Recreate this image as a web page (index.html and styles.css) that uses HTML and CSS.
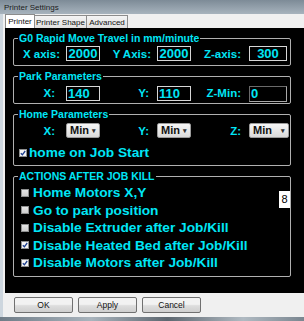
FILE: index.html
```html
<!DOCTYPE html>
<html lang="en">

<head>
  <meta charset="UTF-8">
  <title>Printer Settings</title>
  <link rel="stylesheet" href="styles.css">
</head>

<body>
  <div class="titlebar">Printer Settings</div>

  <div class="window">
    <div class="tabs">
      <span class="tab active">Printer</span>
      <span class="tab">Printer Shape</span>
      <span class="tab">Advanced</span>
    </div>

    <div class="page">
      <fieldset class="group">
        <legend>G0 Rapid Move Travel in mm/minute</legend>
        <div class="row">
          <label>X axis:</label><span class="num center">2000</span>
          <label>Y Axis:</label><span class="num center">2000</span>
          <label class="far">Z-axis:</label><span class="num center">300</span>
        </div>
      </fieldset>

      <fieldset class="group">
        <legend>Park Parameters</legend>
        <div class="row wide-gap">
          <label>X:</label><span class="num">140</span>
          <label>Y:</label><span class="num">110</span>
          <label>Z-Min:</label><span class="num sunken">0</span>
        </div>
      </fieldset>

      <fieldset class="group">
        <legend>Home Parameters</legend>
        <div class="row wide-gap sel-row">
          <label>X:</label><span class="combo">Min<i>&#9662;</i></span>
          <label>Y:</label><span class="combo">Min<i>&#9662;</i></span>
          <label>Z:</label><span class="combo long">Min<i>&#9662;</i></span>
        </div>
        <div class="check home">
          <span class="box on"><svg width="6" height="6" viewBox="0 0 6 6"><path d="M0.8 3.2 L2.4 4.8 L5.2 1" fill="none" stroke="#1d3f8f" stroke-width="1.3"/></svg></span>
          home on Job Start
        </div>
      </fieldset>

      <fieldset class="group actions">
        <legend>ACTIONS AFTER JOB KILL</legend>
        <span class="badge">8</span>
        <div class="check"><span class="box"></span>Home Motors X,Y</div>
        <div class="check"><span class="box"></span>Go to park position</div>
        <div class="check"><span class="box"></span>Disable Extruder after Job/Kill</div>
        <div class="check"><span class="box on"><svg width="6" height="6" viewBox="0 0 6 6"><path d="M0.8 3.2 L2.4 4.8 L5.2 1" fill="none" stroke="#1d3f8f" stroke-width="1.3"/></svg></span>Disable Heated Bed after Job/Kill</div>
        <div class="check"><span class="box on"><svg width="6" height="6" viewBox="0 0 6 6"><path d="M0.8 3.2 L2.4 4.8 L5.2 1" fill="none" stroke="#1d3f8f" stroke-width="1.3"/></svg></span>Disable Motors after Job/Kill</div>
      </fieldset>
    </div>

    <div class="buttons">
      <button>OK</button>
      <button>Apply</button>
      <button>Cancel</button>
    </div>
  </div>

  <div class="glass-bottom"></div>
</body>

</html>
```

FILE: styles.css
```css
body {
  margin: 0;
  width: 304px;
  height: 321px;
  overflow: hidden;
  font-family: "Liberation Sans", Arial, sans-serif;
  background-color: #9aa6b1;
}

.titlebar {
  height: 14px;
  line-height: 15px;
  padding-left: 4px;
  font-size: 8px;
  color: #1b1b1b;
  background: linear-gradient(#7d8b97, #a7b3bd);
}

.window {
  height: 303px;
  border-left: 3px solid #cdd6de;
  background-color: #f0f0f0;
}

/* tab strip */
.tabs {
  display: flex;
  height: 14px;
  padding-left: 2px;
  align-items: flex-end;
}

.tab {
  height: 13px;
  line-height: 13px;
  font-size: 8px;
  color: #111;
  text-align: center;
  white-space: nowrap;
  border: 1px solid #8c8c8c;
  border-bottom: none;
  background: linear-gradient(#f4f4f4, #e0e0e0);
  box-sizing: border-box;
}

.tab:nth-child(1) { width: 30px; }
.tab:nth-child(2) { width: 53px; margin-left: -1px; }
.tab:nth-child(3) { width: 42px; margin-left: -1px; }

.tab.active {
  height: 14px;
  background: #fff;
  position: relative;
  z-index: 1;
}

/* black tab page */
.page {
  height: 265px;
  margin-left: 2px;
  padding: 4px 0 0 8px;
  box-sizing: border-box;
  background-color: #000;
}

.group {
  position: relative;
  width: 278px;
  margin: 0 0 4px 0;
  padding: 0 0 4px 0;
  box-sizing: border-box;
  border: 1px solid #b0b0b0;
  border-radius: 2px;
  min-width: 0;
}

.group legend {
  margin-left: 4px;
  padding: 0 1px;
  font-size: 10.5px;
  line-height: 13px;
  font-weight: bold;
  color: #00e6f6;
}

.row {
  display: grid;
  grid-template-columns: 52px 34px 57px 34px 58px 38px;
  align-items: center;
  height: 15px;
  margin-top: 1px;
}

.row label {
  text-align: right;
  padding-right: 6px;
  font-size: 11.5px;
  font-weight: bold;
  color: #00e6f6;
}

.row label.far,
.row.wide-gap label {
  padding-right: 8px;
}

.row.wide-gap label:first-child {
  padding-right: 11px;
}

.num {
  height: 15px;
  line-height: 14px;
  padding-left: 1px;
  box-sizing: border-box;
  border: 1px solid #d6d6d6;
  font-size: 13px;
  font-weight: bold;
  color: #00e6f6;
}

.num.center {
  text-align: center;
  padding-left: 0;
}

.num.sunken {
  height: 16px;
  margin-top: 2px;
  border-color: #6a6a6a #a8a8a8 #a8a8a8 #6a6a6a;
}

.sel-row {
  margin-top: 2px;
}

.combo {
  position: relative;
  height: 15px;
  line-height: 13px;
  padding-left: 3px;
  box-sizing: border-box;
  border: 1px solid #9c9c9c;
  border-radius: 2px;
  background: linear-gradient(#f6f6f6, #dadada);
  font-size: 11px;
  font-weight: bold;
  color: #111;
}

.combo.long {
  width: 40px;
}

.combo i {
  position: absolute;
  right: 3px;
  top: 0;
  font-style: normal;
  font-size: 7px;
  color: #333;
}

/* check boxes */
.check {
  display: flex;
  align-items: center;
  height: 17.5px;
  padding-left: 7px;
  font-size: 13.7px;
  font-weight: bold;
  color: #00e6f6;
  white-space: nowrap;
}

.check.home {
  height: 17px;
  margin-top: 6px;
  padding-left: 5px;
  gap: 2px;
}

.check.home .box {
  margin-right: 0;
}

.box {
  display: inline-flex;
  align-items: center;
  justify-content: center;
  width: 8px;
  height: 8px;
  margin-right: 4px;
  box-sizing: border-box;
  border: 1px solid #8e8f8f;
  background: linear-gradient(#e6e6e6, #cfcfcf);
}

.box.on {
  background: #f4f4f4;
}

.box svg {
  display: block;
}

.actions {
  padding-bottom: 4px;
}

.actions legend + .badge + .check {
  margin-top: 1px;
}

.badge {
  position: absolute;
  top: 8px;
  right: 0;
  width: 11px;
  height: 17px;
  line-height: 17px;
  text-align: center;
  background-color: #fff;
  font-size: 11px;
  color: #000;
}

/* dialog buttons */
.buttons {
  display: flex;
  gap: 5px;
  padding: 4px 0 0 11px;
}

.buttons button {
  width: 59px;
  height: 16px;
  padding: 0;
  font-family: "Liberation Sans", Arial, sans-serif;
  font-size: 8.5px;
  color: #111;
  border: 1px solid #707070;
  border-radius: 2px;
  background: linear-gradient(#f2f2f2 45%, #dddddd 55%, #cfcfcf);
}

.glass-bottom {
  height: 4px;
  background: linear-gradient(90deg, #6f7c87, #a9b4bd 30%, #5d6770 55%, #b0bac2 80%, #7a8690);
}
```
